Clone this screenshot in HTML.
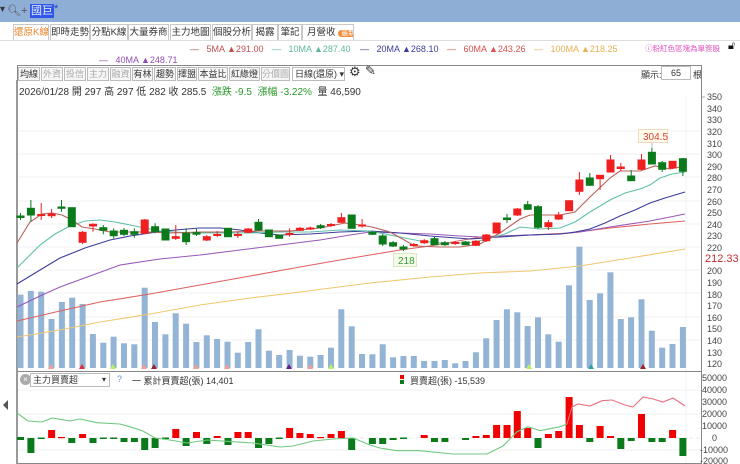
<!DOCTYPE html>
<html><head><meta charset="utf-8"><style>
*{margin:0;padding:0;box-sizing:border-box}
body{width:740px;height:464px;overflow:hidden;background:#fff;font-family:"Liberation Sans","Noto Sans CJK TC",sans-serif;font-size:11px;color:#333;position:relative}
.a{position:absolute;white-space:nowrap}
#top{left:0;top:0;width:740px;height:22px;background:#8eaed6}
.tab{position:absolute;top:24px;height:16px;border:1px solid #c8c8c8;border-bottom:none;background:#fff;font-size:9.5px;line-height:15px;text-align:center;color:#333;white-space:nowrap;overflow:hidden}
.btn{position:absolute;top:67px;height:14px;border:1px solid #bbb;background:#f6f6f6;font-size:9px;line-height:12px;text-align:center;color:#333;white-space:nowrap;overflow:hidden}
.btn.g{color:#aaa}
.lg{font-size:9px;top:44px}
</style></head><body>
<div id="top" class="a"></div>
<div class="a" style="left:0;top:4px;font-size:10px;color:#333">▾</div>
<div class="a" style="left:7px;top:4px;font-size:11px;color:#555">&#x1F50D;&#xFE0E;+</div>
<div class="a" style="left:30px;top:4px;font-size:11px;line-height:14px;background:#2f56e8;color:#e8ecff;padding:0 1px">國巨</div><div class="a" style="left:54px;top:3px;color:#1a3fd0;font-size:11px">*</div>
<div class="tab" style="left:13px;width:36px;color:#e8852a">還原K線</div>
<div class="tab" style="left:50px;width:40px">即時走勢</div>
<div class="tab" style="left:90px;width:38px">分點K線</div>
<div class="tab" style="left:128px;width:41px">大量券商</div>
<div class="tab" style="left:170px;width:41px">主力地圖</div>
<div class="tab" style="left:212px;width:40px">個股分析</div>
<div class="tab" style="left:252px;width:26px">揭露</div>
<div class="tab" style="left:278px;width:24px">筆記</div>
<div class="tab" style="left:302px;width:52px;text-align:left;padding-left:4px">月營收 <span style="background:#f28c3a;color:#fff;border-radius:7px;font-size:7px;padding:0 3px">最新</span></div>
<div class="a" style="left:0;top:40px;width:740px;border-top:1px solid #ddd"></div>

<div class="a lg" style="left:190px"><span style="color:#a05050">—</span>&nbsp;&nbsp;&nbsp;<span style="color:#c05050">5MA ▲291.00</span></div>
<div class="a lg" style="left:272px;color:#5fb8a0">—&nbsp;&nbsp;&nbsp;10MA ▲287.40</div>
<div class="a lg" style="left:360px;color:#3c3c9c">—&nbsp;&nbsp;&nbsp;20MA ▲268.10</div>
<div class="a lg" style="left:447px;color:#e05050">—&nbsp;&nbsp;&nbsp;60MA ▲243.26</div>
<div class="a lg" style="left:534px;color:#e8b050">—&nbsp;&nbsp;&nbsp;100MA ▲218.25</div>
<div class="a" style="left:645px;top:43px;font-size:7.5px;color:#e050c0">ⓘ粉紅色區塊為單簽股</div>
<div class="a" style="left:728px;top:40px;font-size:11px;color:#111">🔓&#xFE0E;</div>
<div class="a lg" style="left:99px;top:55px;color:#9050b0">—&nbsp;&nbsp;&nbsp;40MA ▲248.71</div>

<div class="btn" style="left:18px;width:22px">均線</div>
<div class="btn g" style="left:41px;width:22px">外資</div>
<div class="btn g" style="left:64px;width:22px">投信</div>
<div class="btn g" style="left:87px;width:22px">主力</div>
<div class="btn g" style="left:110px;width:21px">融資</div>
<div class="btn" style="left:132px;width:21px">有林</div>
<div class="btn" style="left:154px;width:22px">趨勢</div>
<div class="btn" style="left:177px;width:20px">擇盟</div>
<div class="btn" style="left:198px;width:30px">本益比</div>
<div class="btn" style="left:229px;width:31px">紅綠燈</div>
<div class="btn g" style="left:261px;width:29px">分價圖</div>
<div class="btn" style="left:292px;width:53px;background:#fff;text-align:left;padding-left:2px">日線(還原)&nbsp;▾</div>
<div class="a" style="left:349px;top:64px;font-size:13px;color:#333">⚙&#xFE0E;</div>
<div class="a" style="left:365px;top:63px;font-size:13px;color:#333">✎&#xFE0E;</div>
<div class="a" style="left:641px;top:68px;font-size:9px;color:#333">顯示:</div>
<div class="a" style="left:661px;top:66px;width:30px;height:14px;border:1px solid #bbb;font-size:9px;text-align:center;line-height:12px">65</div>
<div class="a" style="left:693px;top:68px;font-size:9px">根</div>
<div class="a" style="left:19px;top:83px;font-size:10px;color:#333">2026/01/28 開 297 高 297 低 282 收 285.5 &nbsp;<span style="color:#2a9a2a">漲跌 -9.5 &nbsp;漲幅 -3.22%</span> &nbsp;量 46,590</div>

<svg class="a" style="left:0;top:0" width="740" height="464" viewBox="0 0 740 464">
<g stroke="#f0f0f0" stroke-width="1">
<line x1="17" y1="131" x2="702" y2="131"/><line x1="17" y1="154" x2="702" y2="154"/><line x1="17" y1="177" x2="702" y2="177"/><line x1="17" y1="201" x2="702" y2="201"/><line x1="17" y1="224" x2="702" y2="224"/><line x1="17" y1="247" x2="702" y2="247"/><line x1="17" y1="270" x2="702" y2="270"/><line x1="17" y1="293" x2="702" y2="293"/><line x1="17" y1="317" x2="702" y2="317"/><line x1="17" y1="340" x2="702" y2="340"/>
<line x1="17" y1="390" x2="702" y2="390"/><line x1="17" y1="414" x2="702" y2="414"/><line x1="17" y1="450" x2="702" y2="450"/>
<line x1="686" y1="96" x2="686" y2="464"/>
</g>
<rect x="17.5" y="65.5" width="684" height="398" fill="none" stroke="#888"/>
<line x1="17" y1="371.5" x2="702" y2="371.5" stroke="#888"/>
<line x1="17" y1="80" x2="17" y2="464" stroke="#999" stroke-width="2"/>
<g fill="#94b4d6">
<rect x="17.5" y="294.7" width="6" height="73.3"/><rect x="27.8" y="291" width="6" height="77"/><rect x="38.2" y="291.7" width="6" height="76.3"/><rect x="48.5" y="319" width="6" height="49"/><rect x="58.9" y="302" width="6" height="66"/><rect x="69.2" y="297.7" width="6" height="70.3"/><rect x="79.6" y="304" width="6" height="64"/><rect x="89.9" y="334" width="6" height="34"/><rect x="100.3" y="342.7" width="6" height="25.3"/><rect x="110.6" y="336.7" width="6" height="31.3"/><rect x="121" y="343.3" width="6" height="24.7"/><rect x="131.3" y="344.3" width="6" height="23.7"/><rect x="141.7" y="287.7" width="6" height="80.3"/><rect x="152" y="322" width="6" height="46"/><rect x="162.4" y="334.3" width="6" height="33.7"/><rect x="172.7" y="313.3" width="6" height="54.7"/><rect x="183.1" y="323.7" width="6" height="44.3"/><rect x="193.4" y="342" width="6" height="26"/><rect x="203.8" y="335.3" width="6" height="32.7"/><rect x="214.1" y="339" width="6" height="29"/><rect x="224.5" y="341.7" width="6" height="26.3"/><rect x="234.8" y="352.7" width="6" height="15.3"/><rect x="245.2" y="342" width="6" height="26"/><rect x="255.5" y="329.3" width="6" height="38.7"/><rect x="265.9" y="350.7" width="6" height="17.3"/><rect x="276.2" y="355" width="6" height="13"/><rect x="286.6" y="350" width="6" height="18"/><rect x="296.9" y="355.7" width="6" height="12.3"/><rect x="307.3" y="356.7" width="6" height="11.3"/><rect x="317.6" y="355" width="6" height="13"/><rect x="328" y="347.7" width="6" height="20.3"/><rect x="338.3" y="309.3" width="6" height="58.7"/><rect x="348.7" y="326.3" width="6" height="41.7"/><rect x="359" y="354" width="6" height="14"/>
<rect x="369.4" y="354.3" width="6" height="13.7"/><rect x="379.7" y="344.3" width="6" height="23.7"/><rect x="390.1" y="357.3" width="6" height="10.7"/><rect x="400.4" y="356" width="6" height="12"/><rect x="410.8" y="356" width="6" height="12"/><rect x="421.1" y="361" width="6" height="7"/><rect x="431.5" y="361" width="6" height="7"/><rect x="441.8" y="360" width="6" height="8"/><rect x="452.2" y="363.3" width="6" height="4.7"/><rect x="462.5" y="361" width="6" height="7"/><rect x="472.9" y="352.3" width="6" height="15.7"/><rect x="483.2" y="338.3" width="6" height="29.7"/><rect x="493.6" y="320" width="6" height="48"/><rect x="503.9" y="309.3" width="6" height="58.7"/><rect x="514.3" y="312.3" width="6" height="55.7"/><rect x="524.6" y="326" width="6" height="42"/><rect x="535" y="317.3" width="6" height="50.7"/><rect x="545.3" y="334.3" width="6" height="33.7"/><rect x="555.7" y="341.7" width="6" height="26.3"/><rect x="566" y="285.3" width="6" height="82.7"/><rect x="576.4" y="246.7" width="6" height="121.3"/><rect x="586.7" y="300" width="6" height="68"/><rect x="597.1" y="293.3" width="6" height="74.7"/><rect x="607.4" y="272.3" width="6" height="95.7"/><rect x="617.8" y="319" width="6" height="49"/><rect x="628.1" y="317.3" width="6" height="50.7"/><rect x="638.5" y="299.3" width="6" height="68.7"/><rect x="648.8" y="330.7" width="6" height="37.3"/><rect x="659.2" y="347.7" width="6" height="20.3"/><rect x="669.5" y="344" width="6" height="24"/><rect x="679.9" y="327" width="6" height="41"/>
</g>
<g>
<path d="M48 369l3-5 3 5z" fill="#f0a090"/><path d="M79 369l3-5 3 5z" fill="#e03040"/><path d="M110 369l3-5 3 5z" fill="#b8f060"/><path d="M141 369l3-5 3 5z" fill="#f0a090"/><path d="M151 369l3-5 3 5z" fill="#a02030"/><path d="M193 369l3-5 3 5z" fill="#f0a090"/><path d="M224 369l3-5 3 5z" fill="#f0a090"/><path d="M286 369l3-5 3 5z" fill="#602090"/><path d="M307 369l3-5 3 5z" fill="#f0a090"/><path d="M328 369l3-5 3 5z" fill="#b8f060"/><path d="M526 369l3-5 3 5z" fill="#b8f060"/><path d="M588 369l3-5 3 5z" fill="#30a0a0"/><path d="M640 369l3-5 3 5z" fill="#a02030"/>
</g>
<g fill="none" stroke-width="1.1">
<polyline stroke="#f0c870" points="17,337 60,330 100,322 150,314 200,305 250,298 300,292 370,283 430,277 480,273 530,271 580,266 630,258 685,249"/>
<polyline stroke="#e06060" points="17,321 60,311 100,302 150,294 200,285 250,276 300,267 340,260 370,255 400,250 430,246 480,237 530,235 570,233 610,228 650,224 685,221"/>
<polyline stroke="#9a58b8" points="17,307 40,296 60,287 90,276 120,265 160,259 200,255 240,250 280,245 320,240 350,235 370,232 400,233 430,234 460,236 480,237 500,236 530,235 560,234 580,232 610,227 650,221 685,214"/>
<polyline stroke="#3c3c9c" points="17,284 40,270 60,258 85,248 110,240 130,236 150,233 175,230 200,228 220,228 240,230 260,233 280,235 310,234 340,232 370,231 400,233 430,236 470,239 500,237 530,235 560,234 575,232 590,229 605,223 620,216 635,210 650,203 665,198 685,192"/>
<polyline stroke="#60c0a8" points="17,268 30,255 40,245 55,234 70,226 85,221 100,220 115,222 130,225 145,228 160,231 190,233 220,233 250,233 280,232 310,232 340,230 370,231 400,237 420,241 440,243 460,243 475,242 490,238 505,234 520,227 540,229 560,228 575,222 590,212 610,200 625,193 640,189 650,185 660,178 672,174 685,172"/>
<polyline stroke="#b8605a" points="17,243 30,222 42,214 52,213 62,215 72,220 82,227 95,229 110,232 130,232 150,232 170,233 200,232 230,232 260,231 290,231 320,228 345,223 360,225 372,227 390,232 415,246 440,247 460,247 480,244 500,233 520,219 530,215 545,215 560,215 575,212 590,197 610,178 620,171 640,171 655,166 670,169 685,166"/>
</g>
<g stroke-width="1">
<g stroke="#0a7a1a" fill="#0a7a1a">
<line x1="20.5" y1="213" x2="20.5" y2="220"/><rect x="17" y="216" width="7" height="1.5"/>
<line x1="30.9" y1="200" x2="30.9" y2="221.7"/><rect x="27.4" y="208.3" width="7" height="6.7"/>
<line x1="61.5" y1="200" x2="61.5" y2="211.7"/><rect x="58" y="207" width="7" height="1.3"/>
<rect x="68.3" y="207.7" width="7" height="19"/>
<line x1="103.3" y1="225" x2="103.3" y2="234.3"/><rect x="99.8" y="227.7" width="7" height="2.6"/>
<line x1="113.7" y1="228.3" x2="113.7" y2="238.3"/><rect x="110.2" y="231" width="7" height="4.7"/>
<line x1="124" y1="228" x2="124" y2="236"/><rect x="120.5" y="230.3" width="7" height="4"/>
<line x1="134.4" y1="228.3" x2="134.4" y2="237.7"/><rect x="130.9" y="231.7" width="7" height="2.6"/>
<line x1="155.1" y1="223.3" x2="155.1" y2="233.3"/><rect x="151.6" y="226.7" width="7" height="5"/>
<rect x="162" y="229" width="7" height="11"/>
<line x1="186.1" y1="228.3" x2="186.1" y2="245"/><rect x="182.6" y="233.3" width="7" height="8.4"/>
<line x1="196.5" y1="229" x2="196.5" y2="236"/><rect x="193" y="232.7" width="7" height="1.5"/>
<rect x="224.5" y="228.3" width="7" height="8.4"/>
<line x1="258.5" y1="219" x2="258.5" y2="231"/><rect x="255" y="222.3" width="7" height="7.7"/>
<rect x="265.4" y="230" width="7" height="6.7"/>
<rect x="275.7" y="235" width="7" height="3.3"/>
<line x1="320.6" y1="224" x2="320.6" y2="229"/><rect x="317.1" y="225.7" width="7" height="2"/>
<rect x="348.2" y="215" width="7" height="13.3"/>
<line x1="372.4" y1="231" x2="372.4" y2="235"/><rect x="368.9" y="232.3" width="7" height="2"/>
<line x1="382.7" y1="234" x2="382.7" y2="246"/><rect x="379.2" y="236" width="7" height="8"/>
<line x1="393.1" y1="241" x2="393.1" y2="247"/><rect x="389.6" y="242.7" width="7" height="3.3"/>
<line x1="403.5" y1="245" x2="403.5" y2="251"/><rect x="400" y="247" width="7" height="2"/>
<line x1="434.5" y1="237" x2="434.5" y2="245"/><rect x="431" y="238.7" width="7" height="6"/>
<line x1="444.9" y1="241" x2="444.9" y2="246"/><rect x="441.4" y="242.7" width="7" height="2"/>
<line x1="465.6" y1="241" x2="465.6" y2="245"/><rect x="462.1" y="242" width="7" height="2.7"/>
<line x1="507" y1="214" x2="507" y2="223"/><rect x="503.5" y="218" width="7" height="1.5"/>
<line x1="527.7" y1="201" x2="527.7" y2="210"/><rect x="524.2" y="204.7" width="7" height="4.6"/>
<line x1="538" y1="205" x2="538" y2="229"/><rect x="534.5" y="206.7" width="7" height="20.6"/>
<line x1="589.8" y1="173" x2="589.8" y2="186"/><rect x="586.3" y="178" width="7" height="7.3"/>
<line x1="631.2" y1="170" x2="631.2" y2="181"/><rect x="627.7" y="176" width="7" height="4.7"/>
<line x1="651.9" y1="148" x2="651.9" y2="164"/><rect x="648.4" y="152.3" width="7" height="11.7"/>
<line x1="662.2" y1="161" x2="662.2" y2="172"/><rect x="658.7" y="162.7" width="7" height="6.6"/>
<line x1="682.9" y1="158" x2="682.9" y2="176"/><rect x="679.4" y="158.7" width="7" height="12.6"/>
</g>
<g stroke="#f02020" fill="#f02020">
<line x1="41.2" y1="203" x2="41.2" y2="220"/><rect x="37.7" y="214.5" width="7" height="1"/>
<line x1="51.6" y1="209" x2="51.6" y2="218"/><rect x="48.1" y="214" width="7" height="1.7"/>
<line x1="82.6" y1="231" x2="82.6" y2="244"/><rect x="79.1" y="232.3" width="7" height="10"/>
<line x1="93" y1="223.3" x2="93" y2="231.7"/><rect x="89.5" y="224.3" width="7" height="1.7"/>
<line x1="144.7" y1="219" x2="144.7" y2="234"/><rect x="141.2" y="220" width="7" height="13.3"/>
<line x1="175.8" y1="225" x2="175.8" y2="240"/><rect x="172.3" y="236.7" width="7" height="1.6"/>
<line x1="206.8" y1="235" x2="206.8" y2="241"/><rect x="203.3" y="236.7" width="7" height="3.3"/>
<line x1="217.2" y1="231" x2="217.2" y2="237"/><rect x="213.7" y="234.5" width="7" height="1"/>
<line x1="237.9" y1="232" x2="237.9" y2="238"/><rect x="234.4" y="234.5" width="7" height="1"/>
<line x1="248.2" y1="228" x2="248.2" y2="233"/><rect x="244.7" y="229" width="7" height="3.3"/>
<line x1="289.6" y1="228.3" x2="289.6" y2="236.7"/><rect x="286.1" y="233.5" width="7" height="1"/>
<line x1="299.9" y1="227" x2="299.9" y2="231"/><rect x="296.4" y="228.3" width="7" height="2"/>
<line x1="310.3" y1="226.5" x2="310.3" y2="230"/><rect x="306.8" y="228" width="7" height="1"/>
<line x1="331" y1="223" x2="331" y2="227"/><rect x="327.5" y="224.5" width="7" height="1"/>
<line x1="341.4" y1="213" x2="341.4" y2="223"/><rect x="337.9" y="217.7" width="7" height="4.6"/>
<line x1="362.1" y1="219" x2="362.1" y2="227.7"/><rect x="358.6" y="225" width="7" height="1"/>
<line x1="413.8" y1="243" x2="413.8" y2="247"/><rect x="410.3" y="244.5" width="7" height="1"/>
<line x1="424.2" y1="239" x2="424.2" y2="244"/><rect x="420.7" y="240.7" width="7" height="2"/>
<line x1="455.2" y1="241" x2="455.2" y2="245"/><rect x="451.7" y="242.5" width="7" height="1"/>
<line x1="475.9" y1="240" x2="475.9" y2="246"/><rect x="472.4" y="241.3" width="7" height="4"/>
<line x1="486.3" y1="234" x2="486.3" y2="242"/><rect x="482.8" y="235" width="7" height="5.7"/>
<rect x="493.1" y="223" width="7" height="10"/>
<line x1="517.3" y1="208" x2="517.3" y2="216"/><rect x="513.8" y="209" width="7" height="6"/>
<line x1="548.4" y1="220" x2="548.4" y2="230"/><rect x="544.9" y="222.7" width="7" height="4"/>
<line x1="558.7" y1="212" x2="558.7" y2="220"/><rect x="555.2" y="215" width="7" height="4"/>
<rect x="565.6" y="200.7" width="7" height="10"/>
<line x1="579.4" y1="172" x2="579.4" y2="195"/><rect x="575.9" y="180" width="7" height="11.3"/>
<line x1="600.1" y1="175" x2="600.1" y2="190"/><rect x="596.6" y="175.3" width="7" height="3.4"/>
<line x1="610.5" y1="155" x2="610.5" y2="172"/><rect x="607" y="160" width="7" height="12"/>
<line x1="620.8" y1="163" x2="620.8" y2="171"/><rect x="617.3" y="167" width="7" height="1.5"/>
<line x1="641.5" y1="154" x2="641.5" y2="170"/><rect x="638" y="160" width="7" height="9.3"/>
<line x1="672.6" y1="161" x2="672.6" y2="169"/><rect x="669.1" y="161.3" width="7" height="6.7"/>
</g>
</g>
<rect x="638.5" y="129.5" width="29" height="13" fill="#fffbe8" stroke="#e8dcc0"/>
<text x="643" y="140" font-size="10" fill="#e04040" font-family="Liberation Sans">304.5</text>
<line x1="652" y1="143" x2="652" y2="148" stroke="#bbb"/>
<rect x="393.5" y="253.5" width="23" height="13" fill="#f4fbe8" stroke="#d8e8c0"/>
<text x="398" y="264" font-size="10" fill="#3a9a3a" font-family="Liberation Sans">218</text>
<g font-size="9" fill="#444" font-family="Liberation Sans">
<text x="707" y="100">350</text><text x="707" y="112">340</text><text x="707" y="123">330</text><text x="707" y="135">320</text><text x="707" y="147">310</text><text x="707" y="158">300</text><text x="707" y="170">290</text><text x="707" y="181">280</text><text x="707" y="193">270</text><text x="707" y="205">260</text><text x="707" y="216">250</text><text x="707" y="228">240</text><text x="707" y="239">230</text><text x="707" y="251">220</text><text x="707" y="274">200</text><text x="707" y="286">190</text><text x="707" y="298">180</text><text x="707" y="309">170</text><text x="707" y="321">160</text><text x="707" y="332">150</text><text x="707" y="344">140</text><text x="707" y="356">130</text><text x="707" y="367">120</text>
<text x="702" y="381">50000</text><text x="702" y="393">40000</text><text x="702" y="405">30000</text><text x="702" y="417">20000</text><text x="702" y="429">10000</text><text x="712" y="441">0</text><text x="700" y="453">-10000</text><text x="700" y="464">-20000</text>
</g>
<text x="705" y="262" font-size="11" fill="#c03030" font-family="Liberation Sans">212.33</text>
<g stroke="#aaa"><line x1="702" y1="97" x2="705" y2="97"/></g>
<line x1="17" y1="438" x2="702" y2="438" stroke="#e8e8e8" stroke-dasharray="4,3"/>
<g fill="#f00000">
<rect x="48.1" y="430" width="7" height="8"/><rect x="58" y="437" width="7" height="1.2"/><rect x="79.1" y="434" width="7" height="4"/><rect x="172.3" y="429" width="7" height="9"/><rect x="193" y="432" width="7" height="6"/><rect x="213.7" y="436" width="7" height="2"/><rect x="234.4" y="432" width="7" height="6"/><rect x="244.7" y="432" width="7" height="6"/><rect x="286.1" y="428" width="7" height="10"/><rect x="296.4" y="433" width="7" height="5"/><rect x="306.8" y="434" width="7" height="4"/><rect x="317.1" y="437" width="7" height="1.2"/><rect x="327.5" y="434" width="7" height="4"/><rect x="337.9" y="431" width="7" height="7"/>
<rect x="420.7" y="435" width="7" height="3"/><rect x="472.4" y="436" width="7" height="2"/><rect x="482.8" y="435" width="7" height="3"/><rect x="493.1" y="425" width="7" height="13"/><rect x="503.5" y="425" width="7" height="13"/><rect x="513.8" y="411" width="7" height="27"/><rect x="524.2" y="428" width="7" height="10"/><rect x="544.9" y="434" width="7" height="4"/><rect x="555.2" y="431" width="7" height="7"/><rect x="565.6" y="397" width="7" height="41"/><rect x="575.9" y="425" width="7" height="13"/><rect x="596.6" y="426" width="7" height="12"/><rect x="607" y="436" width="7" height="2"/><rect x="638" y="414" width="7" height="24"/><rect x="669.1" y="430" width="7" height="8"/>
</g>
<g fill="#0a7a1a">
<rect x="17" y="437" width="7" height="3"/><rect x="27.4" y="438" width="7" height="15"/><rect x="37.7" y="437.5" width="7" height="1.5"/><rect x="68.3" y="438" width="7" height="5"/><rect x="89.5" y="438" width="7" height="5"/><rect x="99.8" y="437.5" width="7" height="1.5"/><rect x="110.2" y="437.5" width="7" height="1.5"/><rect x="120.5" y="438" width="7" height="4"/><rect x="130.9" y="438" width="7" height="4"/><rect x="141.2" y="438" width="7" height="12"/><rect x="151.6" y="438" width="7" height="10"/><rect x="162" y="437.5" width="7" height="1.5"/><rect x="182.6" y="438" width="7" height="8"/><rect x="203.3" y="438" width="7" height="6"/><rect x="224.5" y="438" width="7" height="7"/><rect x="255" y="438" width="7" height="10"/><rect x="265.4" y="438" width="7" height="6"/><rect x="275.7" y="437.5" width="7" height="1.5"/><rect x="348.2" y="438" width="7" height="12"/>
<rect x="368.9" y="438" width="7" height="6"/><rect x="379.2" y="438" width="7" height="6"/><rect x="389.6" y="438" width="7" height="2"/><rect x="400" y="437.5" width="7" height="1.5"/><rect x="431" y="438" width="7" height="4"/><rect x="441.4" y="438" width="7" height="4"/><rect x="462.1" y="438" width="7" height="2"/><rect x="534.5" y="438" width="7" height="10"/><rect x="586.3" y="438" width="7" height="4"/><rect x="617.3" y="438" width="7" height="11"/><rect x="627.7" y="438" width="7" height="3"/><rect x="648.4" y="438" width="7" height="4"/><rect x="658.7" y="438" width="7" height="4"/><rect x="679.4" y="438" width="7" height="18"/>
</g>
<polyline fill="none" stroke="#70c880" stroke-width="1.1" points="17,413 28,421 42,422 52,418 70,421 80,419 97,422.7 120,424 133,427.7 143,431 155,438 170,440 187,443 207,440 233,441.7 253,443 280,447 293,446 313,441 333,439 353,438 370,445 380,448 397,450.7 420,450.7 453,454 487,454 503,446 517,431.7 528,426.7 540,430.7 560,426.7 567,424"/>
<polyline fill="none" stroke="#e87080" stroke-width="1.1" points="567,424 572,407 578,404 590,406 602,400.7 612,400 625,405 633,407 643,397 653,399 663,402 673,398 685,406"/>
<path d="M3 405l5-5v10z" fill="#555"/>
</svg>

<div class="a" style="left:20px;top:374px;width:11px;height:11px;border-radius:50%;background:#aaa;color:#fff;font-size:8px;line-height:11px;text-align:center">×</div>
<div class="a" style="left:30px;top:373px;width:80px;height:14px;border:1px solid #bbb;background:#fff;font-size:9px;line-height:12px;padding-left:2px">主力買賣超<span style="float:right;padding-right:3px;font-size:8px">▾</span></div>
<div class="a" style="left:117px;top:374px;font-size:9px;color:#6a90d0">?</div>
<div class="a" style="left:132px;top:374px;font-size:9px;color:#333">一 累計買賣超(張) 14,401</div>
<div class="a" style="left:400px;top:375px;width:4px;height:4px;background:#e00"></div><div class="a" style="left:400px;top:380px;width:4px;height:4px;background:#0a7a1a"></div>
<div class="a" style="left:410px;top:374px;font-size:9px;color:#333">買賣超(張) -15,539</div>
</body></html>
